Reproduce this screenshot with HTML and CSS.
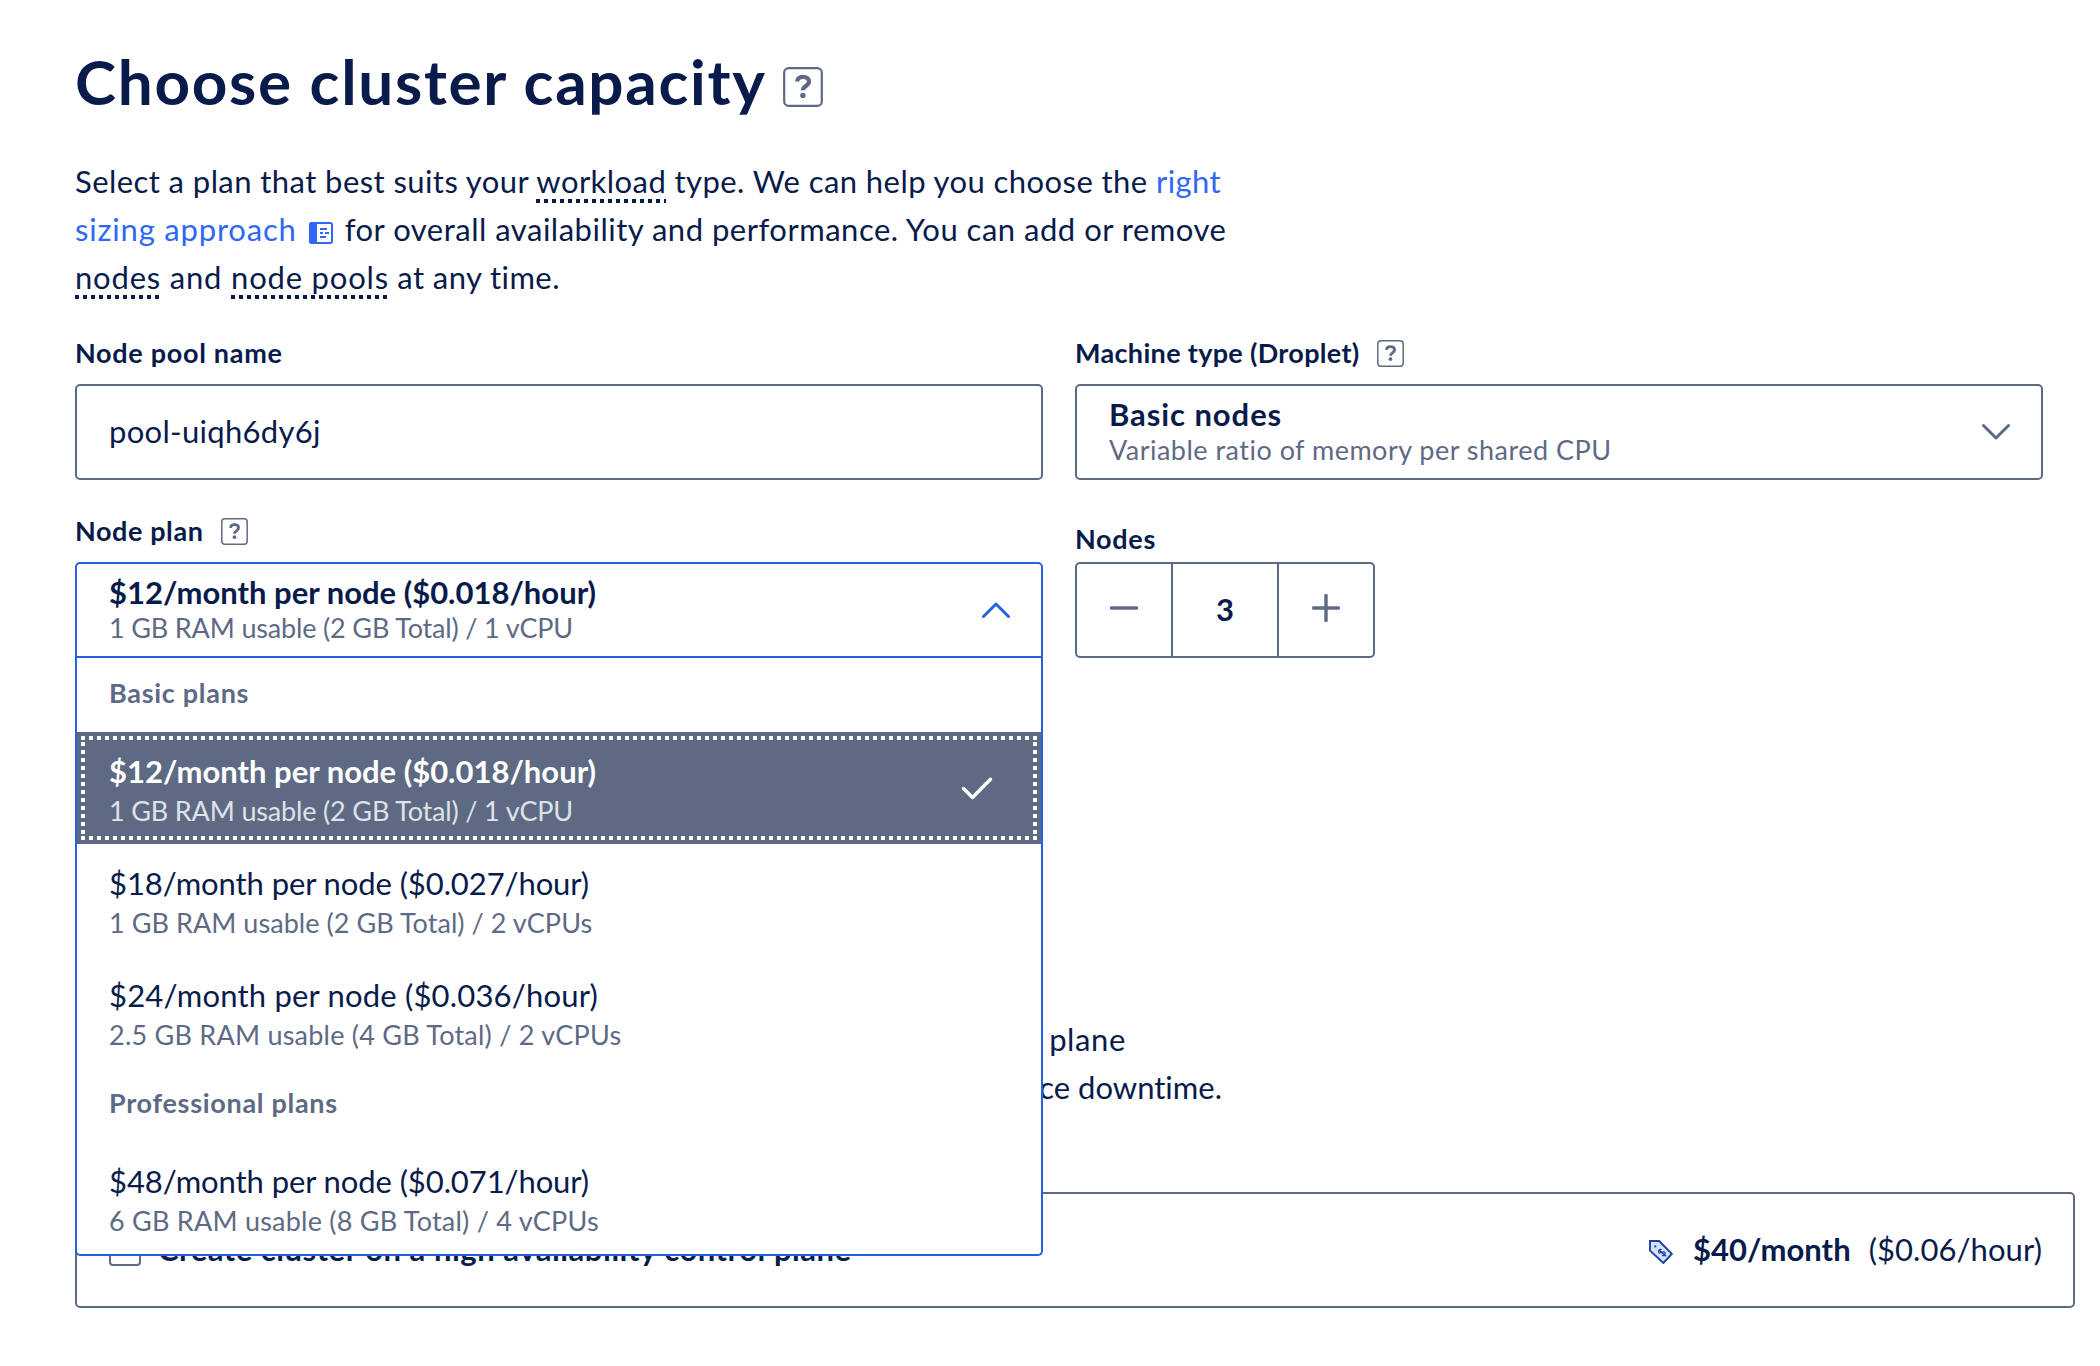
FILE: index.html
```
<!DOCTYPE html>
<html lang="en">
<head>
<meta charset="utf-8">
<title>Choose cluster capacity</title>
<link rel="stylesheet" href="styles.css">
</head>
<body>
<svg class="defs" width="0" height="0" aria-hidden="true">
  <symbol id="help" viewBox="0 0 20 20">
    <rect x="0.6" y="0.6" width="18.8" height="18.8" rx="2.2" fill="none" stroke="currentColor" stroke-width="1.1"/>
    <path d="M7 7.3C7.2 5.6 8.4 4.9 10 4.9c1.8 0 3 .9 3 2.400 0 2.300-3 2.100-3 4.300" fill="none" stroke="currentColor" stroke-width="2.1"/>
    <circle cx="9.95" cy="14.2" r="1.35" fill="currentColor"/>
  </symbol>
</svg>
<main class="page">
  <h1 class="title"><span>Choose cluster capacity</span><svg class="help help-lg"><use href="#help"/></svg></h1>
  <p class="intro">Select a plan that best suits your <span class="term">workload</span> type. We can help you choose the <a class="link">right<br><span class="approach">sizing approach</span></a><svg class="doc" viewBox="0 0 24 22"><rect x="1" y="1" width="22" height="20" rx="2" fill="#fff" stroke="#2f68f5" stroke-width="2"/><path d="M3 0h5v22H3a3 3 0 0 1-3-3V3a3 3 0 0 1 3-3z" fill="#2f68f5"/><path d="M11 7h7M11 11h3M16 11h4M11 15h6" stroke="#2f68f5" stroke-width="2"/></svg><span class="line-two">for overall availability and performance. You can add or remove</span><br><span class="line-three"><span class="term">nodes</span> and <span class="term">node pools</span></span> at any time.</p>

  <div class="grid">
    <div class="cell">
      <div class="label">Node pool name</div>
      <div class="field"><span class="value">pool-uiqh6dy6j</span></div>
    </div>
    <div class="cell">
      <div class="label label-tight">Machine type (Droplet)<svg class="help"><use href="#help"/></svg></div>
      <div class="field">
        <div class="pair"><strong class="nodes-name">Basic nodes</strong><small class="ratio">Variable ratio of memory per shared CPU</small></div>
        <svg class="chevron" viewBox="0 0 30 18"><path d="M2.500 2.500 15 15 27.500 2.500"/></svg>
      </div>
    </div>
    <div class="cell">
      <div class="label label-plan">Node plan<svg class="help"><use href="#help"/></svg></div>
      <div class="field open">
        <div class="pair"><strong>$12/month per node ($0.018/hour)</strong><small>1 GB RAM usable (2 GB Total) / 1 vCPU</small></div>
        <svg class="chevron" viewBox="0 0 30 18"><path d="M2.500 15.500 15 3 27.500 15.500"/></svg>
        <div class="menu">
          <div class="group">Basic plans</div>
          <div class="option selected">
            <div class="pair"><strong>$12/month per node ($0.018/hour)</strong><small>1 GB RAM usable (2 GB Total) / 1 vCPU</small></div>
            <svg class="check" viewBox="0 0 32 24"><path d="M2.500 12.500 11.500 21.500 29.500 3.200"/></svg>
          </div>
          <div class="option"><div class="pair"><span class="price">$18/month per node ($0.027/hour)</span><small class="sub-18">1 GB RAM usable (2 GB Total) / 2 vCPUs</small></div></div>
          <div class="option"><div class="pair"><span class="price price-24">$24/month per node ($0.036/hour)</span><small class="sub-24">2.5 GB RAM usable (4 GB Total) / 2 vCPUs</small></div></div>
          <div class="group">Professional plans</div>
          <div class="option"><div class="pair"><span class="price">$48/month per node ($0.071/hour)</span><small class="sub-24">6 GB RAM usable (8 GB Total) / 4 vCPUs</small></div></div>
        </div>
      </div>
    </div>
    <div class="cell cell-nodes">
      <div class="label">Nodes</div>
      <div class="stepper">
        <div class="step"><svg class="sign" viewBox="0 0 28 28"><path d="M1.500 14h25"/></svg></div>
        <div class="count">3</div>
        <div class="step"><svg class="sign" viewBox="0 0 28 28"><path d="M1.500 14h25M14 1.500v25"/></svg></div>
      </div>
    </div>
  </div>

  <div class="ha-text"><div class="ha-first">plane</div><div class="ha-second">ce downtime.</div></div>

  <div class="card">
    <span class="box"></span>
    <strong class="card-name">Create cluster on a high availability control plane</strong>
    <svg class="tag" viewBox="0 0 24 24"><path d="M1 1h9.200L22.800 13.800 14.400 23 1 10.600z" fill="#d5e1fb" stroke="#1c3fa0" stroke-width="1.900"/><circle cx="6.300" cy="6.400" r="1.100" fill="#1c3fa0"/><path d="M12.600 9.800c-1.800-1-3.900 1.100-2.700 2.700 1.500 1.800 3.900-1.900 5.700-.3 1.500 1.500-.3 4.300-2.500 3.200M9.700 9.700l7.300 6.600" fill="none" stroke="#1c3fa0" stroke-width="1.300"/></svg>
    <strong class="cost">$40/month</strong><span class="hourly">($0.06/hour)</span>
  </div>
</main>
</body>
</html>
```
FILE: styles.css
```
* { box-sizing: border-box; }
body {
  margin: 0;
  background: #fff;
  color: #081b4b;
  font: 400 31px/48px Lato, "Open Sans", sans-serif;
  font-variant-ligatures: none;
}
.defs { display: block; height: 0; }
.page { padding: 45px 25px 0 75px; }

.title {
  display: flex;
  align-items: center;
  height: 72px;
  margin: 0 0 40px;
  font-size: 62px;
  line-height: 72px;
  font-weight: 700;
  letter-spacing: 0.0275em;
}
.help { width: 27px; height: 27px; margin: 1px 0 0 17px; color: #5e6a85; flex: none; }
.help-lg { width: 40px; height: 40px; margin: 12px 0 0 16px; }

.intro { margin: 0; letter-spacing: 0.0138em; white-space: nowrap; }
.term {
  background: repeating-linear-gradient(90deg, #081b4b 0 4px, transparent 4px 8px) left bottom / 100% 4px no-repeat;
  padding-bottom: 3px;
}
.line-two { letter-spacing: 0.0162em; }
.line-three { letter-spacing: 0.026em; }
.approach { letter-spacing: 0.026em; }
.link { color: #2f68f5; }
.doc { width: 24px; height: 22px; margin: 0 12px -3px 12px; }

.grid {
  display: grid;
  grid-template-columns: 968px 968px;
  gap: 32px;
  margin-top: 33px;
}
.cell-nodes { padding-top: 8px; }
.cell-nodes .label { margin-bottom: 6px; }
.label {
  display: flex;
  align-items: center;
  height: 36px;
  margin-bottom: 14px;
  padding-top: 1px;
  font-size: 27px;
  line-height: 36px;
  font-weight: 700;
  letter-spacing: 0.026em;
}
.label-tight { letter-spacing: 0.012em; }
.label-plan { letter-spacing: 0.022em; }
.field {
  position: relative;
  display: flex;
  align-items: center;
  justify-content: space-between;
  height: 96px;
  padding: 0 30px 0 32px;
  border: 2px solid #5e6a85;
  border-radius: 5px;
}
.value { padding-bottom: 2px; letter-spacing: 0.01em; }
.pair { display: flex; flex-direction: column; }
.field > .pair { padding-bottom: 2px; }
.pair strong, .price { line-height: 36px; white-space: nowrap; }
.pair small {
  margin-top: 2px;
  font-size: 27px;
  line-height: 32px;
  color: #5e6a85;
  letter-spacing: -0.006em;
  white-space: nowrap;
}
.pair .nodes-name { letter-spacing: 0.03em; }
.pair .ratio { letter-spacing: 0.018em; }
.pair .sub-18 { letter-spacing: 0.002em; }
.pair .sub-24 { letter-spacing: 0.0085em; }
.price { letter-spacing: -0.003em; }
.price-24 { letter-spacing: 0.006em; }

.chevron { width: 30px; height: 18px; fill: none; stroke: #5e6a85; stroke-width: 3; stroke-linecap: round; stroke-linejoin: round; }
.open { border-color: #2860e2; border-radius: 5px 5px 0 0; }
.open .chevron { stroke: #2860e2; }

.menu {
  position: absolute;
  top: 94px;
  left: -2px;
  z-index: 2;
  width: 968px;
  border: 2px solid #2860e2;
  border-top: 0;
  border-radius: 0 0 5px 5px;
  background: #fff;
}
.group {
  height: 74px;
  padding: 17px 32px 21px;
  font-size: 27px;
  line-height: 36px;
  font-weight: 700;
  color: #5e6a85;
  letter-spacing: 0.026em;
}
.option {
  display: flex;
  justify-content: space-between;
  align-items: flex-start;
  height: 112px;
  padding: 21px 32px 0;
}
.option .pair small { margin-top: 6px; }
.selected {
  position: relative;
  padding: 21px 48px 0 32px;
  background: #5e6a83;
  color: #fff;
}
.selected::after {
  content: "";
  position: absolute;
  inset: 4px;
  background:
    repeating-linear-gradient(90deg, #fff 0 4px, transparent 4px 8px) left top / 100% 4px no-repeat,
    repeating-linear-gradient(90deg, #fff 0 4px, transparent 4px 8px) left bottom / 100% 4px no-repeat,
    repeating-linear-gradient(180deg, #fff 0 4px, transparent 4px 8px) left 6px / 4px 92px no-repeat,
    repeating-linear-gradient(180deg, #fff 0 4px, transparent 4px 8px) right 6px / 4px 92px no-repeat;
}
.selected .pair small { color: #dfe2e8; }
.check { width: 32px; height: 24px; margin-top: 23px; fill: none; stroke: #fff; stroke-width: 3.4; stroke-linecap: round; stroke-linejoin: round; }

.stepper { display: flex; width: 300px; height: 96px; border: 2px solid #5e6a85; border-radius: 5px; }
.step { flex: 1; display: flex; align-items: center; justify-content: center; padding-bottom: 4px; }
.count {
  width: 108px;
  border: solid #5e6a85;
  border-width: 0 2px;
  text-align: center;
  font-weight: 700;
  line-height: 90px;
}
.sign { width: 28px; height: 28px; fill: none; stroke: #5e6a85; stroke-width: 3.4; stroke-linecap: round; }

.ha-text { margin-top: 357px; text-align: right; }
.ha-first { width: 1051px; letter-spacing: 0.02em; }
.ha-second { width: 1147px; }

.card {
  display: flex;
  align-items: center;
  height: 116px;
  margin-top: 81px;
  padding: 0 31px 0 32px;
  border: 2px solid #5e6a85;
  border-radius: 5px;
}
.box { width: 32px; height: 32px; border: 2px solid #5e6a85; border-radius: 4px; }
.card-name { margin: 0 auto 3px 17px; letter-spacing: 0.017em; }
.tag { width: 24px; height: 24px; margin: 4px 20px 0 0; }
.cost { margin-bottom: 3px; }
.hourly { margin: 0 0 3px 18px; letter-spacing: 0.002em; }
```
